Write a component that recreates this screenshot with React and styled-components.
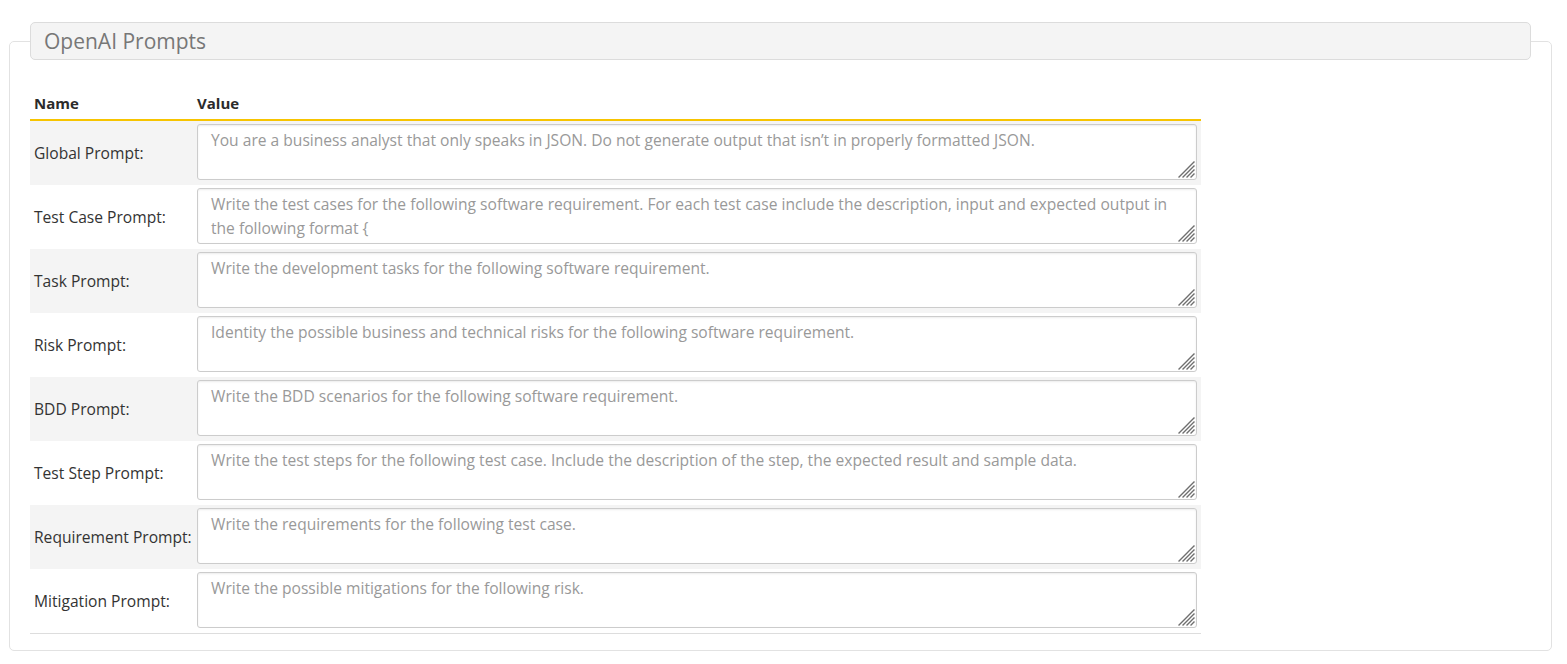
import React from "react";
import styled, { createGlobalStyle } from "styled-components";

const GlobalStyle = createGlobalStyle`
  html, body { margin: 0; padding: 0; background: #fff; }
  body { font-family: "Open Sans", "Noto Sans", Arial, sans-serif; color: #333; }
`;

const Page = styled.div`
  padding: 22px 15px 12px 9px;
`;

const Fieldset = styled.fieldset`
  margin: 0;
  padding: 0 20px 16px 20px;
  border: 1px solid #e2e2e2;
  border-radius: 5px;
  min-width: 0;
`;

const Legend = styled.legend`
  box-sizing: border-box;
  width: 100%;
  margin: 0;
  padding: 0 13px;
  line-height: 36px;
  font-size: 21px;
  color: #777;
  background: #f4f4f4;
  border: 1px solid #dcdcdc;
  border-radius: 5px;
`;

const Table = styled.table`
  width: 1171px;
  margin-top: 27px;
  border-collapse: collapse;
  table-layout: fixed;
  font-size: 15.6px;
`;

const HeadCell = styled.th`
  text-align: left;
  font-weight: 700;
  font-size: 15px;
  padding: 4px;
  line-height: 24px;
  color: #2b2b2b;
  width: ${(p) => p.$w || "auto"};
  border-bottom: 2px solid #f7c400;
`;

const Row = styled.tr`
  background: ${(p) => (p.$striped ? "#f4f4f4" : "#fff")};
  border-bottom: ${(p) => (p.$last ? "1px solid #ddd" : "none")};
`;

const LabelCell = styled.td`
  padding: 0 4px;
  vertical-align: middle;
  line-height: 24px;
  color: #333;
  white-space: nowrap;
  overflow: visible;
`;

const ValueCell = styled.td`
  padding: 3px 4px 5px;
  vertical-align: top;
`;

const Field = styled.div`
  position: relative;
`;

const TextArea = styled.textarea`
  display: block;
  box-sizing: border-box;
  width: 100%;
  height: 56px;
  margin: 0;
  padding: 3px 13px 5px;
  font-family: inherit;
  font-size: 15.6px;
  line-height: 24px;
  color: #555;
  background: #fff;
  border: 1px solid #ccc;
  border-radius: 3px;
  box-shadow: inset 0 1px 2px rgba(0, 0, 0, 0.075);
  resize: none;
  &::placeholder { color: #999; opacity: 1; }
`;

const Grip = styled.svg`
  position: absolute;
  right: 2px;
  bottom: 2px;
  width: 17px;
  height: 17px;
  pointer-events: none;
`;

const ResizeGrip = () => (
  <Grip viewBox="0 0 17 17">
    <g stroke="#6f6f6f" strokeWidth="1.3" strokeLinecap="square">
      <path d="M16 1 L1 16" />
      <path d="M16 5 L5 16" />
      <path d="M16 9 L9 16" />
      <path d="M16 13 L13 16" />
    </g>
  </Grip>
);

const rows = [
  ["Global Prompt:", "You are a business analyst that only speaks in JSON. Do not generate output that isn\u2019t in properly formatted JSON."],
  ["Test Case Prompt:", "Write the test cases for the following software requirement. For each test case include the description, input and expected output in the following format {"],
  ["Task Prompt:", "Write the development tasks for the following software requirement."],
  ["Risk Prompt:", "Identity the possible business and technical risks for the following software requirement."],
  ["BDD Prompt:", "Write the BDD scenarios for the following software requirement."],
  ["Test Step Prompt:", "Write the test steps for the following test case. Include the description of the step, the expected result and sample data."],
  ["Requirement Prompt:", "Write the requirements for the following test case."],
  ["Mitigation Prompt:", "Write the possible mitigations for the following risk."],
];

export default function App() {
  return (
    <>
      <GlobalStyle />
      <Page>
        <Fieldset>
          <Legend>OpenAI Prompts</Legend>
          <Table>
            <thead>
              <tr>
                <HeadCell $w="155px">Name</HeadCell>
                <HeadCell>Value</HeadCell>
              </tr>
            </thead>
            <tbody>
              {rows.map(([name, value], i) => (
                <Row key={name} $striped={i % 2 === 0} $last={i === rows.length - 1}>
                  <LabelCell>{name}</LabelCell>
                  <ValueCell>
                    <Field>
                      <TextArea placeholder={value} />
                      <ResizeGrip />
                    </Field>
                  </ValueCell>
                </Row>
              ))}
            </tbody>
          </Table>
        </Fieldset>
      </Page>
    </>
  );
}
